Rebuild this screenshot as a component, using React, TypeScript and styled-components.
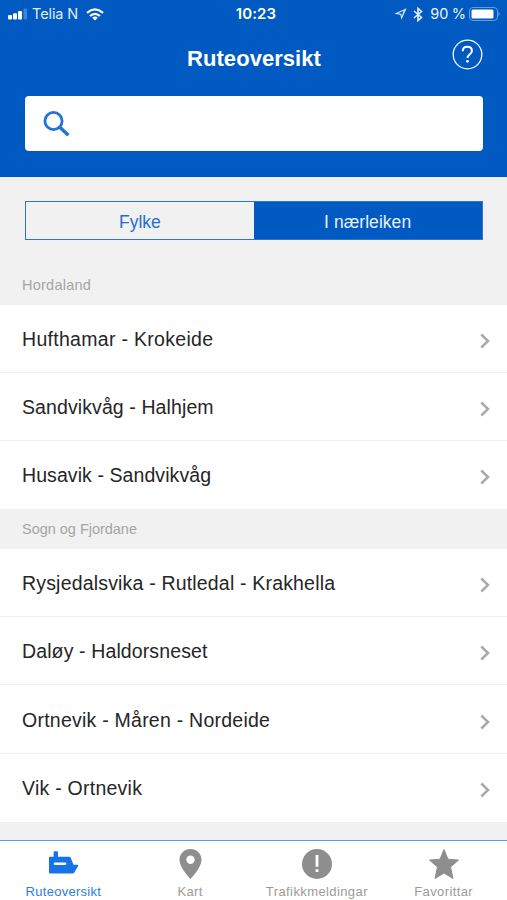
import React from "react";
import styled, { createGlobalStyle } from "styled-components";

const Global = createGlobalStyle`
  * { box-sizing: border-box; }
  body { margin: 0; background: #f1f1f1; }
  button { font: inherit; border: 0; background: none; padding: 0; margin: 0; }
`;
const Screen = styled.div`
  width: 507px; height: 900px; overflow: hidden;
  display: flex; flex-direction: column;
  background: #f1f1f1;
  font-family: "Liberation Sans", Arial, sans-serif;
`;
const Header = styled.header`
  height: 177px; flex: none; background: #005ac1; color: #fff;
`;
const StatusBar = styled.div`
  height: 28px; padding: 0 7px 0 8px;
  display: grid; grid-template-columns: 1fr auto 1fr; align-items: center;
  font: 15px/28px Inter, sans-serif; letter-spacing: -0.1px;
`;
const StatusGroup = styled.div<{ $end?: boolean }>`
  display: flex; align-items: center; height: 28px;
  justify-content: ${(p) => (p.$end ? "flex-end" : "flex-start")};
  svg { flex: none; }
`;
const Carrier = styled.span`margin: 0 8px 0 4px; font-size: 14.5px; opacity: .88;`;
const Clock = styled.span`padding-left: 4px; font-weight: 600; font-size: 15px; letter-spacing: .1px;`;
const Percent = styled.span`margin: 0 2px 0 7px; font-size: 14.5px; letter-spacing: 0.1px; word-spacing: -1px; opacity: .92;`;
const TitleBar = styled.div`
  height: 68px; padding: 0 24px 0 25px;
  display: grid; grid-template-columns: 31px 1fr 31px; align-items: start;
`;
const Title = styled.h1`
  grid-column: 2; margin: 17px 0 0; text-align: center;
  font-size: 22px; line-height: 28px; font-weight: 700; letter-spacing: 0.05px;
`;
const HelpButton = styled.button`
  width: 31px; height: 31px; margin-top: 11px; color: #fff;
  svg { display: block; }
`;
const SearchBox = styled.label`
  height: 55px; margin: 0 24.5px 0 25px; padding-left: 17px;
  display: flex; align-items: center; background: #fff; border-radius: 4px;
  input { flex: 1; border: 0; outline: 0; background: transparent; font-size: 20px; }
`;
const Segments = styled.div`
  height: 39px; flex: none; margin: 24px 24.5px 0 25px; display: flex; border: 1px solid #2b77cf;
`;
const Segment = styled.button<{ $active?: boolean }>`
  flex: 1; text-align: center; font-size: 17.5px; line-height: 40px;
  letter-spacing: ${(p) => (p.$active ? "0.05px" : "0")};
  background: ${(p) => (p.$active ? "#005ac1" : "transparent")};
  color: ${(p) => (p.$active ? "#e6f1ff" : "#2470ce")};
`;
const SectionTitle = styled.h2<{ $first?: boolean }>`
  height: ${(p) => (p.$first ? "65px" : "40px")}; flex: none; margin: 0;
  padding: ${(p) => (p.$first ? "25px" : "0")} 22px 0;
  font-size: 14.5px; line-height: 40px; font-weight: 400;
  letter-spacing: ${(p) => (p.$first ? "0.25px" : "-0.02px")}; color: #a5a5a5;
`;
const List = styled.ul`margin: 0; padding: 0; list-style: none; flex: none;`;
const Row = styled.li`
  height: 68.1px; padding: 0 17px 0 22px; display: flex; align-items: center; justify-content: space-between;
  background: #fff; color: #262626; font-size: 19.5px; line-height: 28px;
  border-bottom: 1px solid #f1f1f1;
  &:last-child { border-bottom-color: #fff; }
  svg { margin-top: 5px; }
`;
const Label = styled.span<{ $spacing: number }>`padding-top: 1px; letter-spacing: ${(p) => p.$spacing}px;`;
const TabBar = styled.nav`
  height: 60px; margin-top: auto; flex: none; display: grid; grid-template-columns: repeat(4, 1fr);
  background: #fff; border-top: 1px solid #569cea;
`;
const Tab = styled.button<{ $active?: boolean }>`
  display: flex; flex-direction: column; align-items: center; padding-top: 7px;
  color: ${(p) => (p.$active ? "#1673e6" : "#8e8e8e")};
  svg { display: block; }
`;
const TabLabel = styled.span<{ $active?: boolean }>`
  margin-top: 4px; white-space: nowrap; font-size: 13px; line-height: 16px;
  letter-spacing: ${(p) => (p.$active ? "0.28px" : "0.4px")};
  color: ${(p) => (p.$active ? "#2d7ee2" : "#9b9b9b")};
`;

const Chevron = () => (
  <svg width="10" height="16" viewBox="0 0 10 16" fill="none" stroke="#aaa" strokeWidth="2.5">
    <path d="M1.3 1.5 8 8 1.3 14.5" />
  </svg>
);
const Ferry = () => (
  <svg width="32" height="32" viewBox="0 0 32 32">
    <path fill="currentColor" d="M2.6 8.8h4V4.5q0-1.2 1.2-1.2h2q1.2 0 1.2 1.2v4.3h11.4q.8 0 1.2.8l2.9 7.2h4.2q1 0 .5 1l-4 7q-.4.7-1.2.7H3q-1 0-1-1V9.5q0-.7.6-.7Z" />
    <path stroke="#fff" strokeWidth="2.6" strokeLinecap="round" d="M8 15.8h10" />
  </svg>
);
const Pin = () => (
  <svg width="32" height="32" viewBox="0 0 32 32" fill="currentColor" fillRule="evenodd">
    <path d="M16.5 1C10.3 1 5.5 5.8 5.5 11.8c0 8.2 11 19.2 11 19.2s11-11 11-19.2C27.5 5.8 22.7 1 16.5 1Zm0 6.5a4.2 4.2 0 1 1 0 8.4 4.2 4.2 0 0 1 0-8.4Z" />
  </svg>
);
const Alert = () => (
  <svg width="32" height="32" viewBox="0 0 32 32">
    <circle cx="16" cy="16" r="15" fill="currentColor" />
    <path fill="#fff" d="M14.6 7h2.8v11.8h-2.8zM14.6 21.2h2.8v2.8h-2.8z" />
  </svg>
);
const Star = () => (
  <svg width="32" height="32" viewBox="0 0 32 32">
    <path fill="currentColor" stroke="currentColor" strokeLinejoin="round" d="m16 1.5 4 9.7 10.5.9-8 6.9 2.5 11.5-9-5.5-9 5.5L9.5 19l-8-6.9 10.5-.9Z" />
  </svg>
);

const hordaland = [
  { name: "Hufthamar - Krokeide", spacing: 0.3 },
  { name: "Sandvikvåg - Halhjem", spacing: 0.1 },
  { name: "Husavik - Sandvikvåg", spacing: 0.08 },
];
const sogn = [
  { name: "Rysjedalsvika - Rutledal - Krakhella", spacing: 0.18 },
  { name: "Daløy - Haldorsneset", spacing: 0.12 },
  { name: "Ortnevik - Måren - Nordeide", spacing: 0.24 },
  { name: "Vik - Ortnevik", spacing: 0.25 },
];
const Routes = ({ items }: { items: { name: string; spacing: number }[] }) => (
  <List>
    {items.map((r) => (
      <Row key={r.name}><Label $spacing={r.spacing}>{r.name}</Label><Chevron /></Row>
    ))}
  </List>
);
const tabs = [
  { label: "Ruteoversikt", icon: <Ferry /> },
  { label: "Kart", icon: <Pin /> },
  { label: "Trafikkmeldingar", icon: <Alert /> },
  { label: "Favorittar", icon: <Star /> },
];

export default function App() {
  return (
    <Screen>
      <Global />
      <Header>
        <StatusBar>
          <StatusGroup>
            <svg width="20" height="12" viewBox="0 0 20 12" fill="#fff">
              <rect y="7" width="4" height="4.5" rx="1" />
              <rect x="5" y="5.2" width="4" height="6.3" rx="1" />
              <rect x="10" y="3" width="4" height="8.5" rx="1" />
              <rect x="15.5" y=".5" width="3.5" height="11" rx="1" opacity=".25" />
            </svg>
            <Carrier>Telia N</Carrier>
            <svg width="18" height="13" viewBox="0 0 18 13" fill="none" stroke="#fff" strokeWidth="2.2">
              <path d="M1 4.8Q9-2 17 4.8M4 8Q9 3.6 14 8" />
              <path d="M6.2 9.7Q9 7.3 11.8 9.7L9 12.6Z" fill="#fff" stroke="none" />
            </svg>
          </StatusGroup>
          <Clock>10:23</Clock>
          <StatusGroup $end>
            <svg width="13" height="12" viewBox="0 0 13 12" fill="#d9e9fc" fillRule="evenodd">
              <path d="M12.6.2 7.4 11.7 6.4 6.8.3 5.8ZM9.6 2.7 4 5.2 7.3 5.8 7.9 8Z" />
            </svg>
            <svg width="16" height="15" viewBox="0 0 16 15" fill="none" stroke="#e5f0fd" strokeWidth="1.6">
              <path d="M7 4l7.5 6.5L11 13.6V1.4l3.5 3.1L7 11" />
            </svg>
            <Percent>90 %</Percent>
            <svg width="32" height="15" viewBox="0 0 32 15" fill="none">
              <rect x="1.5" y=".5" width="28" height="13" rx="3.5" stroke="#639ddd" />
              <rect x="3.5" y="2.5" width="22" height="9" rx="1.5" fill="#fff" />
              <path d="M30.5 4.5q2 2.5 0 5" fill="#76a8e2" />
            </svg>
          </StatusGroup>
        </StatusBar>
        <TitleBar>
          <Title>Ruteoversikt</Title>
          <HelpButton aria-label="Hjelp">
            <svg width="31" height="31" viewBox="0 0 31 31" fill="none" stroke="currentColor">
              <circle cx="15.5" cy="15.5" r="14.3" strokeWidth="1.3" />
              <path strokeWidth="2" d="M10.8 12.2C10.8 9.4 12.6 7.8 15.3 7.8s4.6 1.7 4.6 4.1c0 3.1-4.4 3.5-4.4 7.1" />
              <circle cx="15.5" cy="22.3" r="1.4" fill="currentColor" stroke="none" />
            </svg>
          </HelpButton>
        </TitleBar>
        <SearchBox>
          <svg width="30" height="30" viewBox="0 0 30 30" fill="none" stroke="#2374d7" strokeWidth="2.8">
            <circle cx="11.5" cy="12" r="8.6" /><path d="m17.8 18.3 8.6 8" strokeWidth="3.5" />
          </svg>
          <input aria-label="Søk" />
        </SearchBox>
      </Header>
      <Segments>
        <Segment>Fylke</Segment>
        <Segment $active>I nærleiken</Segment>
      </Segments>
      <SectionTitle $first>Hordaland</SectionTitle>
      <Routes items={hordaland} />
      <SectionTitle>Sogn og Fjordane</SectionTitle>
      <Routes items={sogn} />
      <TabBar>
        {tabs.map((t, i) => (
          <Tab key={t.label} $active={i === 0}>
            {t.icon}<TabLabel $active={i === 0}>{t.label}</TabLabel>
          </Tab>
        ))}
      </TabBar>
    </Screen>
  );
}
